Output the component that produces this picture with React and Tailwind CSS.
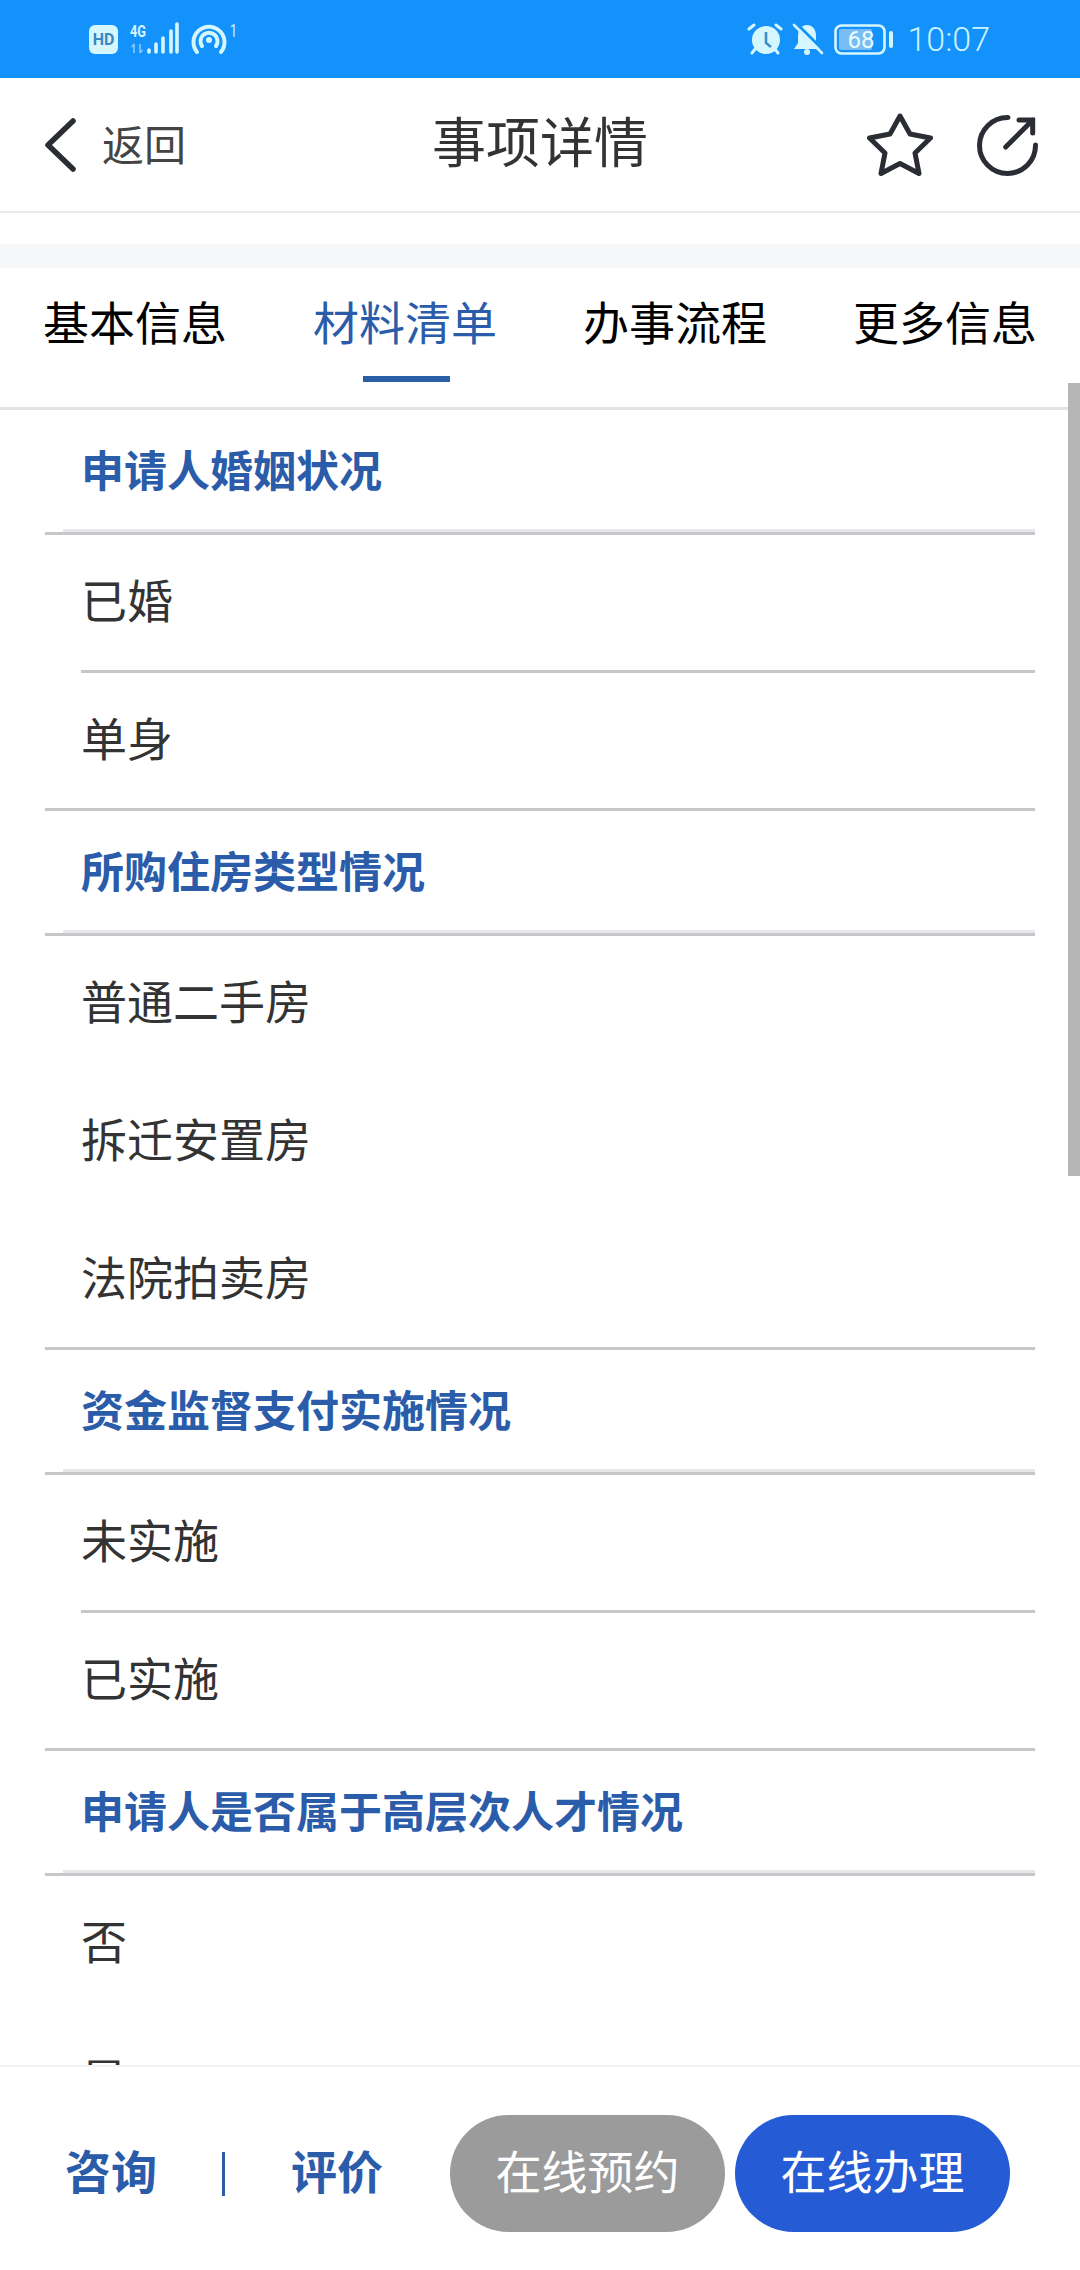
import React from 'react';

const sections = [
  { title: '申请人婚姻状况', inset: true, items: ['已婚', '单身'] },
  { title: '所购住房类型情况', inset: false, items: ['普通二手房', '拆迁安置房', '法院拍卖房'] },
  { title: '资金监督支付实施情况', inset: true, items: ['未实施', '已实施'] },
  { title: '申请人是否属于高层次人才情况', inset: false, items: ['否', '是'] },
];

const tabs = ['基本信息', '材料清单', '办事流程', '更多信息'];

const StatusLeft = () => (
  <svg width="200" height="40" viewBox="0 0 200 40" className="ml-[85px]">
    <rect x="4" y="6" width="29" height="29" rx="6" fill="#d5f6ff" />
    <text x="18.5" y="26" textAnchor="middle" fontFamily="Roboto" fontWeight="700" fontSize="16" fill="#3a88c0">HD</text>
    <text x="45" y="18" fontFamily="Roboto" fontWeight="700" fontSize="16" textLength="16" lengthAdjust="spacingAndGlyphs" fill="#d5f6ff">4G</text>
    <path d="M49 25v9M46.5 28l2.5-3M55 25v9M55 34l2.5-3" stroke="#7cc4fb" strokeWidth="1.8" fill="none" />
    <path d="M64 31v2M71 25v8M78 19v14M86 12v21M92 5v28" stroke="#d5f6ff" strokeWidth="3.6" strokeLinecap="round" />
    <g fill="none" stroke="#d5f6ff" strokeWidth="4" strokeLinecap="round">
      <path d="M112 33a15.500 15.500 0 1 1 24 0" />
      <path d="M117 27a8.500 8.500 0 1 1 14 0" />
    </g>
    <circle cx="124" cy="21" r="3" fill="#d5f6ff" />
    <text x="145" y="18" fontFamily="Roboto" fontSize="18" textLength="7" lengthAdjust="spacingAndGlyphs" fill="#d5f6ff">1</text>
  </svg>
);

const StatusRight = () => (
  <div className="flex items-center mr-[90px]">
    <svg width="160" height="40" viewBox="0 0 160 40">
      {/* alarm */}
      <circle cx="26" cy="21" r="14" fill="#d5f6ff" />
      <path d="M26 13v11l5 4" stroke="#3e8fc8" strokeWidth="2.6" fill="none" />
      <path d="M9 10l5-4M41 10l-5-4M12 34l4-5M38 34l-4-5" stroke="#d5f6ff" strokeWidth="3" strokeLinecap="round" />
      {/* muted bell */}
      <path d="M67 6c6 0 9 5 9 11v7l4 6H54l4-6v-7c0-6 3-11 9-11z" fill="#d5f6ff" />
      <circle cx="67" cy="33" r="3" fill="#d5f6ff" />
      <path d="M55 3l29 29" stroke="#1492fb" strokeWidth="3" />
      <path d="M54 6l28 28" stroke="#d5f6ff" strokeWidth="2.600" strokeLinecap="round" />
      {/* battery */}
      <rect x="95.500" y="6.500" width="49" height="28" rx="6" fill="none" stroke="#d5f6ff" strokeWidth="2.600" />
      <rect x="99" y="10" width="33" height="21" rx="2" fill="#79bdf5" />
      <rect x="149" y="12" width="4" height="17" rx="2" fill="#d5f6ff" />
      <text x="121" y="29" textAnchor="middle" fontFamily="Roboto" fontSize="24" fill="#eafcff">68</text>
    </svg>
    <span className="ml-[7px] font-['Roboto',sans-serif] font-light text-[34px] leading-none text-[#c9f3ff]">10:07</span>
  </div>
);

const SectionHeading = ({ children }) => (
  <div className="px-[45px]">
    <div className="h-[119px] flex items-center pl-[36px] pb-[2px] text-[43px] font-bold text-[#2a5caa]">{children}</div>
    <div className="h-[3px] ml-[18px] bg-[#e6e7e8]" />
    <div className="h-[3px] bg-[#c6c7ca]" />
  </div>
);

// line: 'inset' runs from the text edge, 'full' from the section edge
const ItemRow = ({ children, line }) => {
  if (line === 'inset') {
    return (
      <div className="pl-[81px] pr-[45px]">
        <div className="h-[138px] flex items-center pb-[9px] border-b-[3px] border-[#c6c7c8] text-[46px] text-[#333333]">{children}</div>
      </div>
    );
  }
  if (line === 'full') {
    return (
      <div className="px-[45px]">
        <div className="h-[138px] flex items-center pl-[36px] pb-[9px] border-b-[3px] border-[#c6c7c8] text-[46px] text-[#333333]">{children}</div>
      </div>
    );
  }
  return <div className="h-[138px] flex items-center pl-[81px] pb-[12px] text-[46px] text-[#333333]">{children}</div>;
};

export default function App() {
  return (
    <div className="relative w-[1080px] h-[2270px] overflow-hidden flex flex-col bg-white font-['Noto_Sans_CJK_SC',sans-serif]">
      <div className="h-[78px] shrink-0 bg-[#1492fb] flex items-center justify-between">
        <StatusLeft />
        <StatusRight />
      </div>

      {/* title bar */}
      <div className="h-[135px] shrink-0 border-b-2 border-[#e8e8e8] flex items-center justify-between relative">
        <div className="flex items-center pl-[43px]">
          <svg width="34" height="54" viewBox="0 0 34 54">
            <path d="M30 3L5 27l25 24" fill="none" stroke="#2a2d33" strokeWidth="5.500" strokeLinecap="round" strokeLinejoin="round" />
          </svg>
          <span className="ml-[25px] pb-[4px] text-[42px] text-[#444444]">返回</span>
        </div>
        <span className="absolute left-[432px] pb-[9px] text-[54px] leading-none text-[#333333]">事项详情</span>
        <div className="flex items-center pr-[40px] gap-[41px]">
          <svg width="66" height="64" viewBox="0 0 66 64">
            <path d="M33 3L43 21 63.500 25 48 40 52 60.500 33 50.500 14 60.500 18 40 2.500 25 23 21z" fill="none" stroke="#2a2d33" strokeWidth="5" strokeLinejoin="round" />
          </svg>
          <svg width="66" height="66" viewBox="0 0 66 66">
            <path d="M34 5.500A28 28 0 1 0 61.500 33" fill="none" stroke="#2a2d33" strokeWidth="5" strokeLinecap="round" />
            <path d="M31.700 35L58.700 8M45 8h13.700v13" fill="none" stroke="#2a2d33" strokeWidth="5" strokeLinecap="round" />
          </svg>
        </div>
      </div>

      <div className="h-[31px] shrink-0" />
      <div className="h-[24px] shrink-0 bg-[#f6f7f8]" />

      {/* tab strip */}
      <div className="h-[142px] shrink-0 border-b-[3px] border-[#e2e3e4] flex justify-between px-[43px]">
        {tabs.map((t, i) => (
          <div key={t} className="relative pt-[24px] text-[46px] leading-[56px]">
            <span className={i === 1 ? 'text-[#2a5caa]' : 'text-black'}>{t}</span>
            {i === 1 && <div className="absolute left-[50px] top-[108px] w-[87px] h-[6px] bg-[#2b5ea9]" />}
          </div>
        ))}
      </div>

      <div className="flex-1 min-h-0 overflow-hidden">
        {sections.map((s, si) => (
          <div key={s.title}>
            <SectionHeading>{s.title}</SectionHeading>
            {s.items.map((item, i) => {
              const last = i === s.items.length - 1;
              let line = null;
              if (last && si !== sections.length - 1) line = 'full';
              else if (!last && s.inset) line = 'inset';
              return (
                <ItemRow key={item} line={line}>
                  {item}
                </ItemRow>
              );
            })}
          </div>
        ))}
      </div>

      {/* scroll thumb */}
      <div className="absolute right-0 top-[383px] w-[12px] h-[793px] bg-[#b6b6b6]" />

      {/* bottom actions */}
      <div className="h-[205px] shrink-0 border-t-2 border-[#f3f3f3] bg-white flex items-start pt-[48px] pl-[65px]">
        <div className="flex items-center h-[117px] w-[385px] text-[46px] font-bold text-[#2a5caa]">
          <span className="pb-[8px]">咨询</span>
          <span className="w-[3px] h-[44px] bg-[#2a5caa] ml-[65px] mr-[66px]" />
          <span className="pb-[8px]">评价</span>
        </div>
        <button className="w-[275px] h-[117px] pb-[9px] rounded-full bg-[#9b9b9b] text-white text-[46px]">在线预约</button>
        <button className="ml-[10px] w-[275px] h-[117px] pb-[9px] rounded-full bg-[#255bd4] text-white text-[46px]">在线办理</button>
      </div>
    </div>
  );
}
